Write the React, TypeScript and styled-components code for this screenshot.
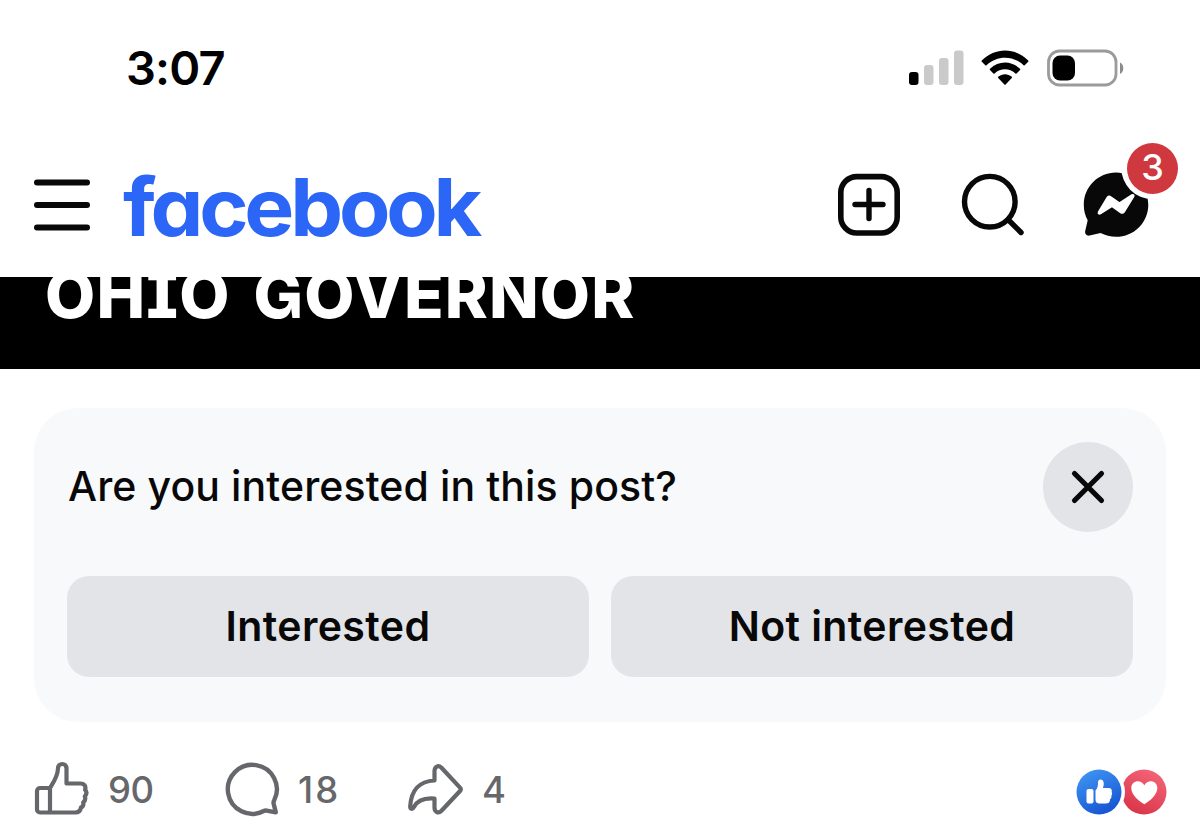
import React from "react";
import styled, { createGlobalStyle } from "styled-components";

const GlobalStyle = createGlobalStyle`
  * {
    box-sizing: border-box;
  }
  body {
    margin: 0;
    background: #fff;
    font-family: Inter, "Liberation Sans", sans-serif;
    color: #080809;
  }
  svg {
    display: block;
    flex-shrink: 0;
    overflow: visible;
  }
  button {
    border: 0;
    padding: 0;
    background: none;
    font: inherit;
    color: inherit;
  }
`;

const Screen = styled.div`
  width: 1200px;
  height: 836px;
  display: flex;
  flex-direction: column;
  overflow: hidden;
`;

const StatusBar = styled.div`
  height: 137px;
  display: flex;
  align-items: center;
  justify-content: space-between;
  padding: 0 76px 2px 126px;
`;

const Time = styled.span`
  font-size: 47px;
  font-weight: 600;
  line-height: 56px;
  letter-spacing: -0.8px;
  color: #000;
`;

const StatusIcons = styled.div`
  display: flex;
  align-items: center;
  gap: 17px;
`;

const Header = styled.header`
  height: 140px;
  display: flex;
  align-items: center;
  justify-content: space-between;
  padding: 0 22px 4px 33px;
`;

const HeaderLeft = styled.div`
  display: flex;
  align-items: center;
  gap: 33px;
`;

const HeaderRight = styled.div`
  display: flex;
  align-items: center;
  gap: 60px;
`;

const IconButton = styled.button<{ $width: number }>`
  position: relative;
  width: ${({ $width }) => $width}px;
  height: 66px;
`;

const Badge = styled.span`
  position: absolute;
  top: -29px;
  right: 0;
  width: 51px;
  height: 51px;
  border-radius: 50%;
  background: #cf383f;
  color: #fff;
  font-size: 36px;
  font-weight: 550;
  line-height: 48px;
  text-align: center;
`;

const Banner = styled.div`
  height: 92px;
  background: #000;
  overflow: hidden;
  padding-left: 45px;
`;

const BannerText = styled.div`
  margin-top: -22px;
  font-size: 65px;
  font-weight: 800;
  line-height: 80px;
  letter-spacing: 1.15px;
  word-spacing: 7.5px;
  white-space: nowrap;
  color: #fff;
  font-feature-settings: "cv08", "cv10";
`;

const Card = styled.section`
  margin: 39px 34px 0;
  height: 314px;
  padding: 34px 33px 0;
  border-radius: 44px;
  background: #f8f9fb;
`;

const CardTop = styled.div`
  height: 90px;
  display: flex;
  align-items: center;
  justify-content: space-between;
`;

const Question = styled.span`
  font-size: 41px;
  font-weight: 500;
  line-height: 50px;
  letter-spacing: 0.1px;
  padding: 0 0 2px 1px;
  white-space: nowrap;
`;

const CloseButton = styled.button`
  width: 90px;
  height: 90px;
  border-radius: 50%;
  background: #e3e4e8;
  display: flex;
  align-items: center;
  justify-content: center;
`;

const Choices = styled.div`
  display: grid;
  grid-template-columns: 1fr 1fr;
  gap: 22px;
  margin-top: 44px;
`;

const ChoiceButton = styled.button`
  height: 101px;
  padding-bottom: 2px;
  border-radius: 22px;
  background: #e3e4e8;
  font-size: 41px;
  font-weight: 600;
  line-height: 50px;
  letter-spacing: 0.4px;
`;

const Footer = styled.footer`
  flex: 1;
  display: flex;
  align-items: flex-start;
  justify-content: space-between;
  padding: 40px 33px 0 34px;
`;

const Actions = styled.div`
  display: flex;
`;

const Action = styled.button<{ $width: number }>`
  width: ${({ $width }) => $width}px;
  height: 56px;
  display: flex;
  align-items: center;
  gap: 18px;
  color: #65676b;
`;

const Count = styled.span<{ $spacing?: number }>`
  font-size: 36.5px;
  font-weight: 550;
  line-height: 44px;
  letter-spacing: ${({ $spacing = 0 }) => $spacing}px;
`;

const Reactions = styled.div`
  padding-top: 7px;
`;

const LogoText = styled.text`
  fill: #2b66f6;
  font-family: Inter, sans-serif;
  font-size: 80px;
  font-weight: 750;
  letter-spacing: -4px;
  /* single-storey a */
  font-feature-settings: "cv11";
`;

const SignalIcon = () => (
  <svg width="56" height="36" viewBox="0 0 56 36">
    <rect x="1" y="22" width="9.5" height="13" rx="3" fill="#000" />
    <rect x="16" y="15" width="9.5" height="20" rx="3" fill="#cacaca" />
    <rect x="31" y="8" width="9.5" height="27" rx="3" fill="#cacaca" />
    <rect x="46" y="0.5" width="9.5" height="34.5" rx="3" fill="#cacaca" />
  </svg>
);

const WifiIcon = () => (
  <svg width="48" height="36" viewBox="0 0 48 36">
    <path d="M.8 10.6C14-2.8 34-2.8 47.2 10.6c.4.4.4.8 0 1.2l-3.5 3.4c-.4.4-.8.4-1.2 0-10.4-10-26.6-10-37 0-.4.4-.8.4-1.2 0L.8 11.800c-.4-.4-.4-.8 0-1.2Z" />
    <path d="M9 18.800c8.6-8.4 21.4-8.4 30 0 .4.4.4.8 0 1.2l-3.4 3.4c-.4.4-.8.4-1.2 0-6-5.6-14.8-5.6-20.8 0-.4.4-.8.4-1.2 0L9 20c-.4-.4-.4-.8 0-1.2Z" />
    <path d="M17.2 26.800c4-3.5 9.6-3.5 13.6 0 .4.3.4.8 0 1.2l-6.2 6.4c-.4.4-.8.4-1.2 0l-6.2-6.4c-.4-.4-.4-.9 0-1.2Z" />
  </svg>
);

const BatteryIcon = () => (
  <svg width="78" height="38" viewBox="0 0 78 38">
    <rect x="2.5" y="2" width="67.5" height="34" rx="11" fill="none" stroke="#9b9b9b" strokeWidth="2.8" />
    <rect x="6.5" y="6.5" width="22.5" height="25" rx="7.5" fill="#000" />
    <path d="M74 13.5c4.4 2 4.4 9.6 0 11.6Z" fill="#8c8c8c" />
  </svg>
);

const MenuIcon = () => (
  <svg width="58" height="54" viewBox="0 0 58 54" stroke="#080809" strokeWidth="6" strokeLinecap="round">
    <path d="M4 4.5h50M4 27h50M4 49.5h50" />
  </svg>
);

const Wordmark = () => (
  <svg width="358" height="66" viewBox="0 0 358 66" role="img" aria-label="facebook">
    <LogoText x="-1" y="63.5" textLength="355" lengthAdjust="spacingAndGlyphs">
      facebook
    </LogoText>
  </svg>
);

const PlusIcon = () => (
  <svg width="64" height="66" viewBox="837 172 64 66" fill="none" stroke="#080809" strokeWidth="5.6" strokeLinecap="round">
    <rect x="840.8" y="176.6" width="56.4" height="56.4" rx="16" />
    <path d="M869 190.5v28M855 204.500h28" strokeWidth="5.4" />
  </svg>
);

const SearchIcon = () => (
  <svg width="62" height="66" viewBox="961 172 62 66" fill="none" stroke="#080809" strokeWidth="5.4" strokeLinecap="round">
    <circle cx="989.8" cy="201.7" r="25.3" />
    <path d="M1009 220.5 1021 232.5" />
  </svg>
);

const MessengerIcon = () => (
  <svg width="66" height="66" viewBox="1083 172 66 66">
    <path
      fill="#080809"
      d="M1116 172.5c18 0 32.3 14.4 32.3 32.2S1134 236.800 1116 236.800c-5.6 0-10.8-1.3-15.4-3.7l-11 2.5c-3 .5-5-1.6-4.4-4.5l2.5-10.800a32 32 0 0 1-3.9-15.6c0-17.800 14.4-32.2 32.2-32.2Z"
    />
    <circle cx="1152.3" cy="168" r="31" fill="#fff" />
    <path
      fill="#fff"
      stroke="#fff"
      strokeWidth="1.5"
      strokeLinejoin="round"
      d="M1098.6 212 1107.3 197.500c.8-1.4 2.2-1.6 3.4-.7l8.9 6.2 12.3-8c1.5-.8 2.5.2 1.7 1.7l-9.4 15.2c-.8 1.3-2.3 1.5-3.5.7l-8.7-6.2-11.5 7.1c-1.5.9-2.7-.1-1.9-1.5Z"
    />
  </svg>
);

const CloseIcon = () => (
  <svg width="34" height="34" viewBox="0 0 34 34" stroke="#080809" strokeWidth="5.2" strokeLinecap="round">
    <path d="M3.5 3.5l27 27M30.5 3.5l-27 27" />
  </svg>
);

const LikeIcon = () => (
  <svg width="56" height="56" viewBox="34 762 56 56" fill="none" stroke="#65676b" strokeWidth="4.2" strokeLinejoin="round">
    <path d="M50 788v25M50 788h-10a3 3 0 0 0-3 3v18.500a3 3 0 0 0 3 3h35.500c3 0 4.9-1.8 5.5-5 2-1 2.7-3 2.2-5.2 2-1.6 2.5-3.700 1.6-5.800 2.2-2.5 2.1-4.800.3-6.700 1.2-4-1.2-6.3-4.6-6.3H66.500v-15c0-6-8.500-6-8.500 0-.3 8-4 13-8 19.500Z" />
  </svg>
);

const CommentIcon = () => (
  <svg width="56" height="56" viewBox="224 762 56 56" fill="none" stroke="#65676b" strokeWidth="4.4" strokeLinejoin="round">
    <path d="M275.8 812.3l-2.2-8.8c-.2-1 0-2 .5-2.9a24.500 24.500 0 1 0-10.3 10.4c.9-.5 1.9-.6 2.9-.4Z" />
  </svg>
);

const ShareIcon = () => (
  <svg width="56" height="56" viewBox="409 762 56 56" fill="none" stroke="#65676b" strokeWidth="4.2" strokeLinejoin="round">
    <path d="M435.5 780.5v-9.500c0-4.5 3.8-6.3 7-3.2l18.5 19.800c1 1.1 1 2.3 0 3.4l-18.5 19.800c-3.2 3.1-7 1.3-7-3.2v-9.100c-11-.9-17.4 2-20.7 8.7-1.2 2.6-3.8 2-3.6-1 1-15.5 9-25.2 24.3-25.7Z" />
  </svg>
);

const ReactionIcons = () => (
  <svg width="90" height="46" viewBox="1077 769 90 46">
    <defs>
      <linearGradient id="like" x1="0" y1="0" x2="0.5" y2="1">
        <stop offset="0" stopColor="#429bf5" />
        <stop offset="1" stopColor="#1858d4" />
      </linearGradient>
      <linearGradient id="love" x1="0.8" y1="0" x2="0.3" y2="1">
        <stop offset="0" stopColor="#f4667a" />
        <stop offset="1" stopColor="#da3448" />
      </linearGradient>
    </defs>
    <circle cx="1144" cy="792" r="22.5" fill="url(#love)" />
    <circle cx="1099" cy="792" r="26" fill="#fff" />
    <circle cx="1099" cy="792" r="22.5" fill="url(#like)" />
    <rect x="1086.5" y="789" width="7" height="14.5" rx="2" fill="#fff" />
    <path
      fill="#fff"
      d="M1095.5 790.5c2.5-2.8 2.5-5 2.5-8.5 0-3.6 5.3-3.6 5.7.7.2 2-.2 3.6-.8 5.4h5.5c2.7 0 4 2 3.2 4 .8 1.3.7 2.7-.3 3.7.4 1.5 0 2.6-1.2 3.4 0 2.8-1.3 4.3-4.3 4.3h-6.300c-2.7 0-4-1-4-3.7Z"
    />
    <path
      fill="#fff"
      d="M1144.3 804.2c-6.3-3.7-13-9.500-13-16.2 0-7.3 9.5-9.2 13-2.7 3.5-6.5 13-4.6 13 2.7 0 6.7-6.7 12.5-13 16.2Z"
    />
  </svg>
);

export default function App() {
  return (
    <>
      <GlobalStyle />
      <Screen>
        <StatusBar>
          <Time>3:07</Time>
          <StatusIcons>
            <SignalIcon />
            <WifiIcon />
            <BatteryIcon />
          </StatusIcons>
        </StatusBar>
        <Header>
          <HeaderLeft>
            <MenuIcon />
            <Wordmark />
          </HeaderLeft>
          <HeaderRight>
            <IconButton $width={64} aria-label="Create">
              <PlusIcon />
            </IconButton>
            <IconButton $width={62} aria-label="Search">
              <SearchIcon />
            </IconButton>
            <IconButton $width={95} aria-label="Messenger">
              <MessengerIcon />
              <Badge>3</Badge>
            </IconButton>
          </HeaderRight>
        </Header>
        <Banner>
          <BannerText>OHIO GOVERNOR</BannerText>
        </Banner>
        <Card>
          <CardTop>
            <Question>Are you interested in this post?</Question>
            <CloseButton aria-label="Close">
              <CloseIcon />
            </CloseButton>
          </CardTop>
          <Choices>
            <ChoiceButton>Interested</ChoiceButton>
            <ChoiceButton>Not interested</ChoiceButton>
          </Choices>
        </Card>
        <Footer>
          <Actions>
            <Action $width={190}>
              <LikeIcon />
              <Count $spacing={-0.4}>90</Count>
            </Action>
            <Action $width={184}>
              <CommentIcon />
              <Count $spacing={2}>18</Count>
            </Action>
            <Action $width={100}>
              <ShareIcon />
              <Count>4</Count>
            </Action>
          </Actions>
          <Reactions>
            <ReactionIcons />
          </Reactions>
        </Footer>
      </Screen>
    </>
  );
}
